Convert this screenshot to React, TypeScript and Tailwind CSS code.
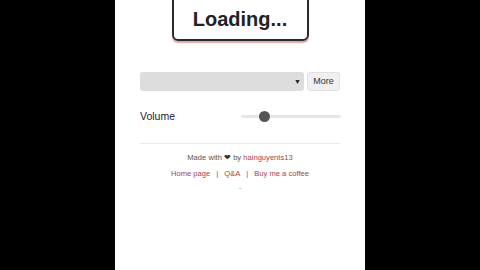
export default function App() {
  return (
    <div className="flex h-[270px] w-[480px] justify-center overflow-hidden bg-black font-['Liberation_Sans',Arial,sans-serif]">
      <div className="flex h-full w-[250px] flex-col bg-white px-[25px]">
        <div className="mx-auto -mt-[12px] w-[137px] rounded-md border-2 border-[#2a2a2a] pt-[15px] pb-[6px] text-center text-[20px] leading-[28px] font-bold text-[#222] shadow-[0_2px_1px_rgba(200,60,60,0.45)]">
          Loading...
        </div>

        <div className="mt-[31px] flex h-[19px] gap-[3px]">
          <div className="relative flex-1 rounded-[3px] bg-[#dddddd]">
            <span className="absolute top-1/2 right-[3px] -translate-y-1/2 text-[7px] text-[#222]">▼</span>
          </div>
          <button className="w-[33px] rounded-[3px] border border-[#e2e2e2] bg-[#f0f0f0] text-[9px] text-[#333]">
            More
          </button>
        </div>

        <div className="mt-[18px] flex items-center justify-between">
          <span className="text-[10.5px] text-[#222]">Volume</span>
          <div className="relative mr-[-1px] h-[11px] w-[100px]">
            <div className="absolute top-[4px] left-0 h-[3px] w-full rounded bg-[#e6e6e6]" />
            <div className="absolute top-0 left-[18px] size-[11px] rounded-full bg-[#555]" />
          </div>
        </div>

        <div className="mt-[18px] h-px bg-[#eaeaea]" />

        <p className="mt-[9px] text-center text-[7.6px] leading-[10px] text-[#555]">
          Made with <span className="text-[#333]">❤</span> by <a className="text-[#a84248]">hainguyents13</a>
        </p>
        <p className="mt-[6px] text-center text-[7.6px] leading-[10px] text-[#666]">
          <a className="text-[#a84248]">Home page</a>
          <span className="mx-[6px]">|</span>
          <a className="text-[#a84248]">Q&amp;A</a>
          <span className="mx-[6px]">|</span>
          <a className="text-[#a84248]">Buy me a coffee</a>
        </p>
        <p className="mt-[4px] text-center text-[8px] leading-[10px] text-[#999]">-</p>
      </div>
    </div>
  );
}
